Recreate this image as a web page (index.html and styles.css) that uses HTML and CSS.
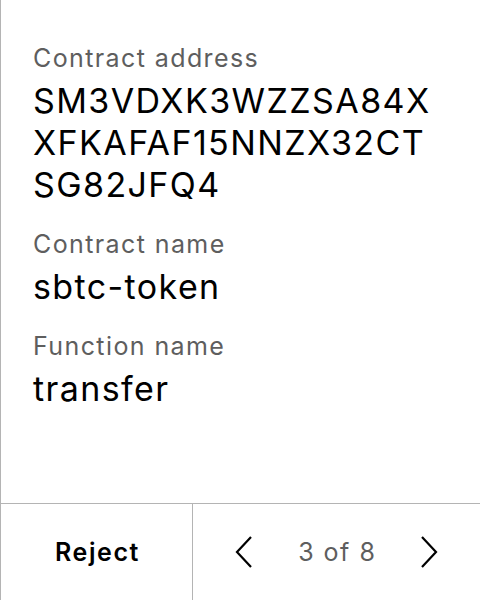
FILE: index.html
```html
<!DOCTYPE html>
<html lang="en">
<head>
<meta charset="utf-8">
<link rel="stylesheet" href="styles.css">
</head>
<body>
<div class="screen">
  <main class="details">
    <section class="field">
      <div class="label">Contract address</div>
      <div class="value">SM3VDXK3WZZSA84X<br>XFKAFAF15NNZX32CT<br>SG82JFQ4</div>
    </section>
    <section class="field">
      <div class="label">Contract name</div>
      <div class="value">sbtc-token</div>
    </section>
    <section class="field">
      <div class="label">Function name</div>
      <div class="value">transfer</div>
    </section>
  </main>
  <footer class="actions">
    <button class="reject">Reject</button>
    <div class="pager">
      <button class="chev" aria-label="Previous">
        <svg width="18" height="32" viewBox="0 0 18 32"><path d="M16 1 L2 16 L16 31" fill="none" stroke="#000" stroke-width="2.2"/></svg>
      </button>
      <span class="count">3 of 8</span>
      <button class="chev" aria-label="Next">
        <svg width="18" height="32" viewBox="0 0 18 32"><path d="M2 1 L16 16 L2 31" fill="none" stroke="#000" stroke-width="2.2"/></svg>
      </button>
    </div>
  </footer>
</div>
</body>
</html>
```
FILE: styles.css
```css
html, body {
  margin: 0;
  padding: 0;
  background: #fff;
}
body {
  font-family: Inter, "Noto Sans", sans-serif;
  color: #000;
}
.screen {
  width: 480px;
  height: 600px;
  box-sizing: border-box;
  border-left: 1px solid #b4b4b4;
  display: flex;
  flex-direction: column;
}
.details {
  flex: 1;
  padding: 42px 0 0 32px;
  display: flex;
  flex-direction: column;
  gap: 22px;
}
.field {
  display: flex;
  flex-direction: column;
  gap: 6px;
}
.label {
  font-size: 25px;
  line-height: 32px;
  letter-spacing: 1.4px;
  color: #5e5e5e;
}
.value {
  font-size: 34px;
  line-height: 42px;
  letter-spacing: 1.4px;
  color: #000;
}
.actions {
  height: 96px;
  border-top: 1px solid #b4b4b4;
  display: flex;
}
.reject {
  width: 192px;
  border: 0;
  border-right: 1px solid #b4b4b4;
  background: none;
  font-family: inherit;
  font-size: 25px;
  font-weight: 600;
  letter-spacing: 1.6px;
  text-indent: 2px;
  color: #000;
  padding: 0;
}
.pager {
  flex: 1;
  display: flex;
  align-items: center;
  justify-content: center;
  gap: 45px;
}
.chev {
  border: 0;
  background: none;
  padding: 0;
  display: flex;
}
.count {
  font-size: 25px;
  letter-spacing: 1.5px;
  margin-right: -1.5px;
  color: #5e5e5e;
}
```
